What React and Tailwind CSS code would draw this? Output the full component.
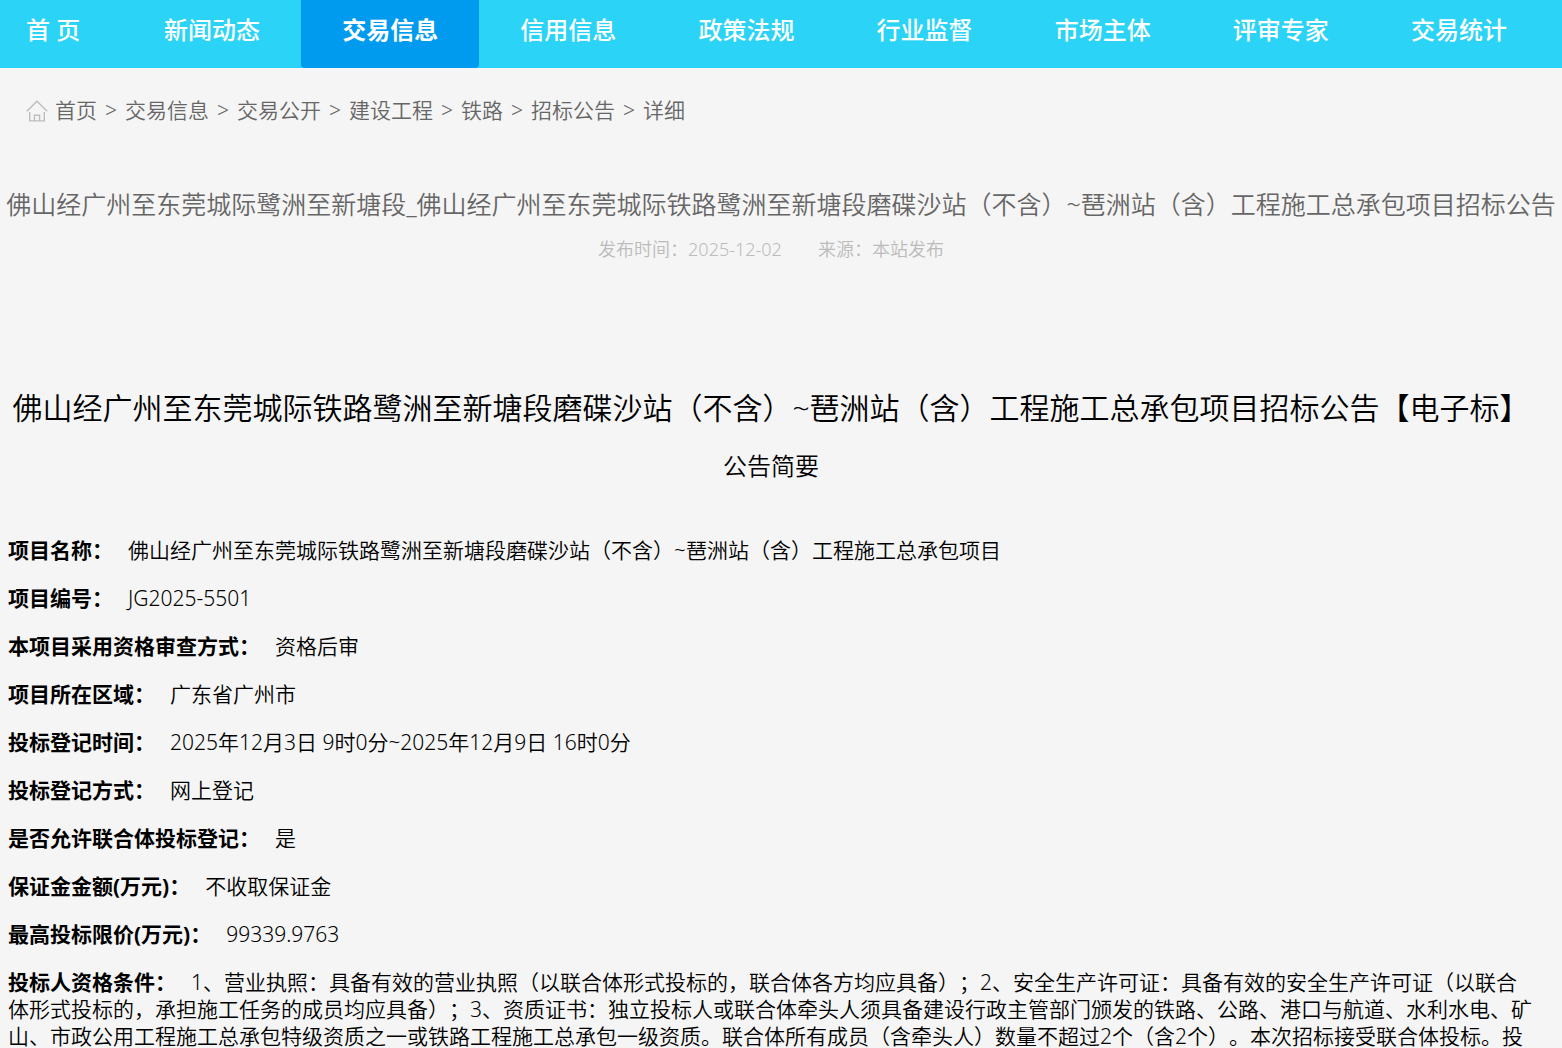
const navItems = ["新闻动态", "交易信息", "信用信息", "政策法规", "行业监督", "市场主体", "评审专家", "交易统计"];

const crumbs = ["首页", "交易信息", "交易公开", "建设工程", "铁路", "招标公告", "详细"];

const fields = [
  ["项目名称：", "佛山经广州至东莞城际铁路鹭洲至新塘段磨碟沙站（不含）~琶洲站（含）工程施工总承包项目"],
  ["项目编号：", "JG2025-5501"],
  ["本项目采用资格审查方式：", "资格后审"],
  ["项目所在区域：", "广东省广州市"],
  ["投标登记时间：", "2025年12月3日 9时0分~2025年12月9日 16时0分"],
  ["投标登记方式：", "网上登记"],
  ["是否允许联合体投标登记：", "是"],
  ["保证金金额(万元)：", "不收取保证金"],
  ["最高投标限价(万元)：", "99339.9763"],
  [
    "投标人资格条件：",
    "1、营业执照：具备有效的营业执照（以联合体形式投标的，联合体各方均应具备）；2、安全生产许可证：具备有效的安全生产许可证（以联合体形式投标的，承担施工任务的成员均应具备）；3、资质证书：独立投标人或联合体牵头人须具备建设行政主管部门颁发的铁路、公路、港口与航道、水利水电、矿山、市政公用工程施工总承包特级资质之一或铁路工程施工总承包一级资质。联合体所有成员（含牵头人）数量不超过2个（含2个）。本次招标接受联合体投标。投",
  ],
];

function HomeIcon() {
  return (
    <svg className="h-[22px] w-[22px] shrink-0" viewBox="0 0 22 22" fill="none" stroke="#bdbdbd" strokeWidth="1.4" aria-hidden="true">
      <path d="M0.8 11.2 11 1.2l10.2 10" />
      <path d="M3.7 12v8.9h14.6V12" />
      <path d="M8.4 20.9v-5.6h5.2v5.6" />
    </svg>
  );
}

function Nav() {
  return (
    <nav className="flex h-[68px] bg-[#2bd4f6] pr-[14px] text-[24px] leading-[60px] font-medium whitespace-nowrap text-white">
      <a href="#home" className="w-[123px] shrink-0 pl-[26px]">首 页</a>
      {navItems.map((item) =>
        item === "交易信息" ? (
          <a key={item} href="#trade" aria-current="page" className="flex-1 rounded-b-sm bg-[#009bee] text-center font-bold">
            {item}
          </a>
        ) : (
          <a key={item} href={`#${item}`} className="flex-1 text-center">
            {item}
          </a>
        )
      )}
    </nav>
  );
}

export default function App() {
  return (
    <div
      lang="zh-CN"
      className="h-screen overflow-hidden bg-[#f5f5f5] font-['Noto_Sans','Noto_Sans_CJK_SC',sans-serif] font-[350] text-black [text-spacing-trim:space-all]"
    >
      <Nav />
      <div className="flex h-[86px] items-center gap-[7px] px-[26px] text-[21px] text-[#666]" aria-label="面包屑">
        <HomeIcon />
        <ol className="flex">
          {crumbs.map((crumb, i) => (
            <li key={crumb} className="flex">
              {i > 0 && <span className="w-7 text-center">&gt;</span>}
              <a href={`#${crumb}`}>{crumb}</a>
            </li>
          ))}
        </ol>
      </div>
      <header className="pt-[29px] text-center">
        <h1 className="flex justify-center text-[25px] leading-[42px] font-[350] whitespace-nowrap text-[#666]">
          佛山经广州至东莞城际鹭洲至新塘段_佛山经广州至东莞城际铁路鹭洲至新塘段磨碟沙站（不含）~琶洲站（含）工程施工总承包项目招标公告
        </h1>
        <p className="flex justify-center gap-9 pt-[9px] pr-5 text-[18px] leading-[30px] text-[#bbb]">
          <span>发布时间：2025-12-02</span>
          <span>来源：本站发布</span>
        </p>
      </header>
      <main className="pt-[116px] pr-7 pl-2">
        <h2 className="flex justify-center text-[30px] leading-[56px] font-[350] whitespace-nowrap">
          佛山经广州至东莞城际铁路鹭洲至新塘段磨碟沙站（不含）~琶洲站（含）工程施工总承包项目招标公告【电子标】
        </h2>
        <h3 className="pt-3 text-center text-[24px] leading-9 font-[350]">公告简要</h3>
        <div className="flex flex-col gap-[21px] pt-[53px] text-[21px] leading-[27px]">
          {fields.map(([label, value]) => (
            <p key={label} className="break-all">
              <strong className="mr-[15px] font-bold">{label}</strong>
              {value}
            </p>
          ))}
        </div>
      </main>
    </div>
  );
}
